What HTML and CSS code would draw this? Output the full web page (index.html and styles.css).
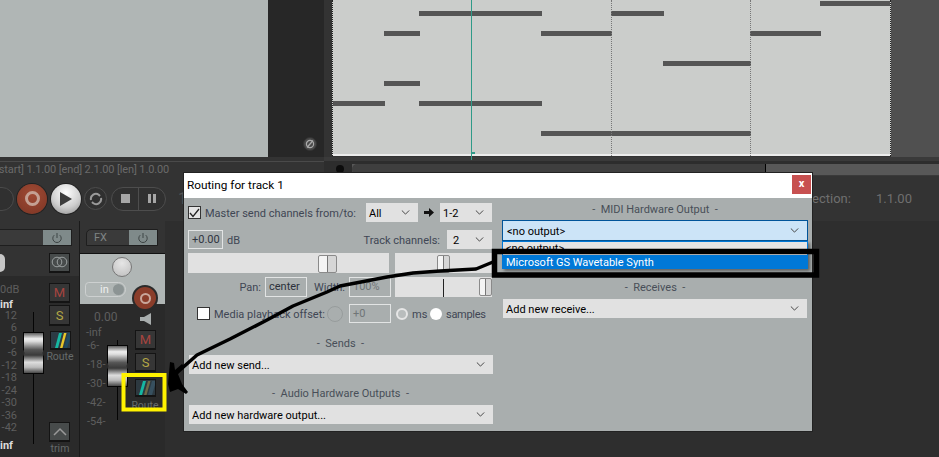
FILE: index.html
```html
<!DOCTYPE html>
<html lang="en">
<head>
<meta charset="utf-8">
<title>Routing for track 1</title>
<link rel="stylesheet" href="styles.css">
</head>
<body>
<svg class="defs" width="0" height="0" aria-hidden="true">
  <symbol id="chev" viewBox="0 0 11 6"><path d="M1 .5 5.5 5 10 .5" fill="none" stroke="#444" stroke-width="1.2"/></symbol>
  <symbol id="power" viewBox="0 0 12 12"><path d="M3.2 3.2a4.2 4.2 0 1 0 5.6 0M6 1v5" fill="none" stroke="#3d4444" stroke-width="1"/></symbol>
</svg>
<div class="app">
  <div class="top">
    <div class="panel"></div>
    <div class="tcp-col"><span class="bypass"><svg width="10" height="10" viewBox="0 0 10 10"><circle cx="5" cy="5" r="3.6" fill="none" stroke="#aaa" stroke-width="1.2"/><path d="M2 8.5 8 1.5" stroke="#aaa" stroke-width="1.2"/></svg></span></div>
    <div class="gutter"></div>
    <div class="midi">
      <i class="note n1"></i><i class="note n2"></i><i class="note n3"></i><i class="note n4"></i><i class="note n5"></i><i class="note n6"></i><i class="note n7"></i><i class="note n8"></i><i class="note n9"></i><i class="note n10"></i><i class="note n11"></i>
      <i class="grid g1"></i><i class="grid g2"></i><i class="grid g3"></i><i class="grid g0"></i>
      <i class="playhead"></i><i class="phmark"></i>
    </div>
    <div class="side"></div>
  </div>

  <div class="statusrow">
    <div class="status"><div class="status-text">[start] 1.1.00 [end] 2.1.00 [len] 1.0.00</div></div>
    <div class="scrollzone">
      <div class="scrollrow">
        <span class="scrollarrow"></span>
        <div class="scrolltrack"><span class="scrollthumb"></span></div>
      </div>
    </div>
  </div>

  <div class="transport">
    <span class="tbtn partial"></span>
    <span class="tbtn rec"><i></i></span>
    <span class="tbtn play"><svg width="14" height="16" viewBox="0 0 14 16"><path d="M1 1 13 8 1 15z" fill="#3c3c3c"/></svg></span>
    <span class="tbtn loop"><svg width="14" height="14" viewBox="0 0 14 14"><path d="M2 8a5 5 0 0 1 8-5l1 1M12 6a5 5 0 0 1-8 5L3 10" fill="none" stroke="#9a9a9a" stroke-width="2"/></svg></span>
    <span class="pill"><span class="seg"><i class="stop"></i></span><span class="seg"><i class="pbar"></i><i class="pbar"></i></span></span>
    <span class="one">1</span>
    <span class="sel"><span>Selection:</span><span>1.1.00</span></span>
  </div>

  <div class="mixer">
    <div class="strip s1">
      <div class="s1-head">
        <div class="fxbar s1fx"><span class="fxname"></span><span class="fxpow"><svg width="12" height="12"><use href="#power"/></svg></span></div>
        <div class="s1-row"><span class="knobsliver"></span><span class="mbtn stereo"><svg width="17" height="12" viewBox="0 0 17 12"><circle cx="6" cy="6" r="4.8" fill="none" stroke="#9a9f9f"/><circle cx="11" cy="6" r="4.8" fill="none" stroke="#9a9f9f"/></svg></span></div>
      </div>
      <div class="s1-body">
        <div class="s1-scale">
          <div class="odb">0dB</div>
          <div class="inf">inf</div>
          <div class="ticks"><span>12</span><span>6</span><span>-0</span><span>-6</span><span>-12</span><span>-18</span><span>-24</span><span>-30</span><span>-36</span><span>-42</span></div>
          <div class="inf">inf</div>
        </div>
        <i class="track t1"></i><i class="cap c1"></i>
        <div class="s1-btns">
          <span class="mbtn m">M</span>
          <span class="mbtn s">S</span>
          <span class="mbtn route"><svg width="19" height="17" viewBox="0 0 19 17"><path fill="#2c3b45" d="M0 0h19v17H0z"/><path fill="#16b7a2" d="M4 16 8 1h3L7 16z"/><path fill="#e8c62a" d="M9 16 13 1h2.500L11.500 16z"/><path fill="#1e4a63" d="M13 16 17 1h2v6l-3 9z"/></svg></span>
          <span class="lbl">Route</span>
          <span class="spacer"></span>
          <span class="mbtn trim"><svg width="14" height="9" viewBox="0 0 14 9"><path d="M1 8 7 2l6 6" fill="none" stroke="#999" stroke-width="1.500"/></svg></span>
          <span class="lbl">trim</span>
        </div>
      </div>
    </div>

    <div class="strip s2">
      <div class="s2-head"><div class="fxbar s2fx"><span class="fxname">FX</span><span class="fxpow"><svg width="12" height="12"><use href="#power"/></svg></span></div></div>
      <div class="trackpanel">
        <span class="knob"></span>
        <span class="inpill">in<i class="indrop"></i></span>
        <span class="arm"><i></i></span>
      </div>
      <div class="s2-body">
        <div class="s2-left">
          <div class="vol">0.00</div>
          <div class="minf">-inf</div>
          <div class="s2-ticks"><span>-6-</span><span>-18-</span><span>-30-</span><span>-42-</span><span>-54-</span></div>
        </div>
        <i class="track t2"></i><i class="cap c2"></i>
        <div class="s2-btns">
          <span class="speaker"><svg width="12" height="12" viewBox="0 0 12 12"><path fill="#a8adad" d="M0 4h4l7-4v12L4 8H0z"/></svg></span>
          <span class="mbtn m">M</span>
          <span class="mbtn s">S</span>
          <span class="mbtn route r2"><svg width="19" height="16" viewBox="0 0 19 16"><path fill="#2d3940" d="M0 0h19v16H0z"/><path fill="#16b7a2" d="M3 15 7 1h3L6 15z"/><path fill="#6f6a45" d="M8 15 12 1h2.500L10.500 15z"/><path fill="#37505f" d="M12 15 16 1h3v4l-3 10z"/></svg></span>
          <span class="lbl">Route</span>
        </div>
      </div>
    </div>
    <div class="mixrest"></div>
  </div>

  <div class="dialog">
    <div class="titlebar"><span class="title">Routing for track 1</span><span class="close">x</span></div>
    <div class="dbody">
      <div class="col-left">
        <div class="row r-master">
          <span class="check on"><svg width="11" height="10" viewBox="0 0 11 10"><path d="M1 5l3 3.500L10 1" fill="none" stroke="#222" stroke-width="1.300"/></svg></span>
          <span class="label master">Master send channels from/to:</span>
          <div class="select w52"><span>All</span><svg class="cv"><use href="#chev"/></svg></div>
          <svg class="rarrow" width="10" height="9" viewBox="0 0 10 9"><path fill="#111" d="M0 3h5V0l5 4.500L5 9V6H0z"/></svg>
          <div class="select w52"><span>1-2</span><svg class="cv"><use href="#chev"/></svg></div>
        </div>
        <div class="row r-db">
          <span class="input w36">+0.00</span><span class="label db">dB</span>
          <span class="label tc">Track channels:</span>
          <div class="select w45"><span>2</span><svg class="cv"><use href="#chev"/></svg></div>
        </div>
        <div class="row r-sliders">
          <div class="slider wide"><i class="thumb th1"></i></div>
          <div class="slider narrow"><i class="thumb th2"></i></div>
        </div>
        <div class="row r-pan">
          <span class="label pan">Pan:</span><span class="input w42 dark">center</span>
          <span class="label width">Width:</span><span class="input w42 faint">100%</span>
          <div class="slider narrow s3"><i class="tick"></i><i class="thumb th3"></i></div>
        </div>
        <div class="row r-media">
          <span class="check"></span>
          <span class="label media">Media playback offset:</span>
          <span class="dial"></span>
          <span class="input w42 faint">+0</span>
          <span class="radio on"></span><span class="label ms">ms</span>
          <span class="radio"></span><span class="label samples">samples</span>
        </div>
        <div class="heading sends">-&nbsp; Sends &nbsp;-</div>
        <div class="select full"><span>Add new send...</span><svg class="cv"><use href="#chev"/></svg></div>
        <div class="heading hw">-&nbsp; Audio Hardware Outputs &nbsp;-</div>
        <div class="select full"><span>Add new hardware output...</span><svg class="cv"><use href="#chev"/></svg></div>
      </div>
      <div class="col-right">
        <div class="heading midih">-&nbsp; MIDI Hardware Output &nbsp;-</div>
        <div class="select focus"><span>&lt;no output&gt;</span><svg class="cv"><use href="#chev"/></svg></div>
        <div class="dropdown">
          <div class="opt">&lt;no output&gt;</div>
          <div class="opt hl">Microsoft GS Wavetable Synth</div>
        </div>
        <div class="heading recv">-&nbsp; Receives &nbsp;-</div>
        <div class="select full recvsel"><span>Add new receive...</span><svg class="cv"><use href="#chev"/></svg></div>
      </div>
    </div>
  </div>

  <svg class="annot" width="939" height="457" viewBox="0 0 939 457" aria-hidden="true">
    <rect x="494.500" y="251.500" width="322" height="23.500" fill="none" stroke="#000" stroke-width="5.500"/>
    <rect x="123.500" y="375" width="41" height="34.500" fill="none" stroke="#fff200" stroke-width="4"/>
    <path d="M493 262 476 269 440 271 413 273 387 277 340 286 327 292 293 306 267 320 230 339 197 355 172 377" fill="none" stroke="#000" stroke-width="3.500" stroke-linejoin="round"/>
    <path d="M170 362 174 363 175 370 182 364 184 366 178 374 182 384 188 392 186 394 178 389 170 392 168 384z" fill="#000"/>
  </svg>
</div>
</body>
</html>
```
FILE: styles.css
```css
* { box-sizing: border-box; }
html, body { margin: 0; padding: 0; }
body { font-family: "Roboto", "Liberation Sans", sans-serif; font-size: 12px; background: #333; }
i { display: block; }
.defs { position: absolute; }
.app { position: relative; width: 939px; height: 457px; overflow: hidden; background: #333; }

/* arrange view */
.top { display: flex; height: 157px; }
.panel { width: 268px; background: #b0b6b5; }
.tcp-col { width: 56px; background: #272727; display: flex; justify-content: flex-end; align-items: flex-end; padding: 0 7px 6px 0; }
.bypass { width: 14px; height: 14px; border-radius: 50%; background: #4a4a4a; border: 1px solid #333; display: flex; align-items: center; justify-content: center; }
.gutter { width: 8px; background: #333; }
.midi { position: relative; width: 559px; height: 156px; background: #cbcdcb; border-bottom: 2px solid #ececec; }
.side { width: 48px; background: #505050; }
.note { position: absolute; height: 5px; background: #555; }
.n1 { left: 488px; width: 70px; top: 1px; }
.n2 { left: 87px; width: 123px; top: 11px; }
.n3 { left: 279px; width: 53px; top: 11px; }
.n4 { left: 52px; width: 36px; top: 31px; }
.n5 { left: 209px; width: 71px; top: 31px; }
.n6 { left: 418px; width: 71px; top: 31px; }
.n7 { left: 331px; width: 88px; top: 61px; }
.n8 { left: 52px; width: 36px; top: 81px; }
.n9 { left: 1px; width: 52px; top: 101px; }
.n10 { left: 87px; width: 123px; top: 101px; }
.n11 { left: 209px; width: 210px; top: 131px; }
.grid { position: absolute; top: 0; bottom: -2px; width: 0; border-left: 1px dotted #777; }
.g0 { left: 0; border-left-color: #222; }
.g1 { left: 279px; }
.g2 { left: 418px; }
.g3 { left: 558px; border-left-color: #222; }
.playhead { position: absolute; left: 139px; top: 0; width: 1px; height: 160px; background: #2f9a88; }
.phmark { position: absolute; left: 139px; top: 152px; width: 4px; height: 2px; background: #2f9a88; }

/* status and scrollbar */
.statusrow { display: flex; height: 19px; }
.status { width: 324px; padding-top: 4px; background: #333; overflow: hidden; }
.status-text { border-top: 1px solid #4a4a4a; height: 15px; line-height: 15px; font-size: 11px; letter-spacing: -.13px; color: #6a6a6a; text-indent: -4px; white-space: nowrap; }
.scrollzone { flex: 1; background: #3a3a3a; padding-top: 4px; }
.scrollrow { height: 14px; background: #2d2d2d; padding: 3px 0 0 12px; display: flex; align-items: flex-start; gap: 8px; }
.scrollarrow { width: 8px; height: 8px; margin-top: 1px; border-radius: 50%; background: #0c0c0c; }
.scrolltrack { flex: 1; height: 11px; background: #585858; position: relative; }
.scrollthumb { position: absolute; left: 0; top: 0; width: 414px; height: 11px; background: #3f3f3f; border-right: 1px solid #000; border-radius: 5px 0 0 5px; }

/* transport */
.transport { display: flex; align-items: center; height: 45px; background: #333; }
.tbtn { display: flex; align-items: center; justify-content: center; border-radius: 50%; flex: none; }
.partial { width: 30px; height: 24px; margin-left: -16px; border: 1px solid #4a4a4a; background: #303030; border-radius: 12px; }
.rec { width: 30px; height: 30px; margin-left: 3px; background: radial-gradient(circle at 50% 35%, #a04a34, #7c3524); box-shadow: 0 0 0 1px #222; }
.rec i { width: 15px; height: 15px; border-radius: 50%; border: 3px solid #c4a093; }
.play { width: 30px; height: 30px; margin-left: 4px; background: radial-gradient(circle at 50% 30%, #fff, #cfcfcf 55%, #8a8a8a); box-shadow: 0 0 0 1px #222; }
.loop { width: 23px; height: 23px; margin-left: 3px; background: #303030; border: 1px solid #4d4d4d; }
.pill { display: flex; width: 55px; height: 24px; margin-left: 4px; border: 1px solid #4d4d4d; border-radius: 12px; background: #303030; }
.seg { flex: 1; display: flex; align-items: center; justify-content: center; gap: 2px; }
.seg + .seg { border-left: 1px solid #4d4d4d; }
.stop { width: 9px; height: 9px; background: #a6a6a6; }
.pbar { width: 3px; height: 9px; background: #a6a6a6; }
.one { margin-left: 12px; font-size: 16px; color: #555; }
.sel { margin-left: auto; display: flex; gap: 25px; padding-right: 27px; font-size: 13px; color: #6f6f6f; }

/* mixer */
.mixer { display: flex; height: 236px; }
.strip { flex: none; display: flex; flex-direction: column; }
.s1 { width: 79px; background: #2a2a2a; }
.s1-head { height: 55px; background: #333; padding-top: 8px; }
.fxbar { display: flex; height: 17px; background: #3a3a3a; border: 1px solid #1e1e1e; }
.s1fx { width: 72px; border-left: 0; }
.fxname { flex: 1; color: #7f8484; font-size: 11px; line-height: 15px; padding-left: 7px; }
.fxpow { width: 28px; background: #7f8a8a; display: flex; align-items: center; justify-content: center; }
.s1-row { display: flex; justify-content: space-between; align-items: center; margin-top: 6px; padding-right: 9px; height: 21px; }
.knobsliver { width: 5px; height: 18px; background: #c7c7c7; border-radius: 0 9px 9px 0; }
.mbtn { display: flex; align-items: center; justify-content: center; width: 21px; height: 20px; flex: none; background: #363636; border: 1px solid #141414; border-bottom-width: 2px; font-size: 13px; }
.m { color: #a8443f; }
.s { color: #b3a645; }
.route { background: #2c3b45; padding: 0; overflow: hidden; }
.stereo, .trim { background: #474b4b; }
.lbl { display: block; width: 28px; margin-left: -4px; text-align: center; font-size: 10.500px; line-height: 14px; color: #666b6b; }
.s1-body { position: relative; flex: 1; display: flex; }
.s1-scale { width: 49px; color: #5e5e5e; font-size: 11px; text-align: right; }
.odb { line-height: 14px; margin-top: 7px; padding-right: 34px; }
.inf { height: 10px; line-height: 10px; margin-top: 3px; padding-right: 39px; color: #ddd; font-weight: 700; }
.ticks { display: flex; flex-direction: column; padding-right: 32px; }
.ticks span { height: 12.440px; line-height: 12px; }
.ticks + .inf { margin-top: 7px; }
.track { position: absolute; width: 1px; background: #050505; }
.t1 { left: 33px; top: 36px; height: 132px; }
.cap { position: absolute; background: linear-gradient(#444 0, #eee 16%, #ddd 22%, #555 42%, #3a3a3a 55%, #ddd 72%, #bbb 84%, #333 100%); box-shadow: inset 0 0 0 1px #050505; clip-path: polygon(0 0, 100% 0, 100% 42%, 92% 50%, 100% 58%, 100% 100%, 0 100%, 0 58%, 8% 50%, 0 42%); }
.c1 { left: 23px; top: 56px; width: 21px; height: 42px; }
.s1-btns { display: flex; flex-direction: column; padding-top: 7px; height: 181px; }
.s1-btns .s { margin-top: 2px; height: 21px; }
.s1-btns .route { margin: 5px 0 0 1px; height: 19px; }
.spacer { height: 58px; }
.s1-btns .lbl { margin-left: -3px; }

.s2 { width: 86px; background: #2a2a2a; border-left: 1px solid #1a1a1a; }
.s2-head { height: 32px; background: #333; padding: 8px 0 0 6px; }
.s2fx { width: 72px; border-radius: 5px 0 0 0; }
.trackpanel { position: relative; height: 51px; background: #b0b6b5; border-top: 1px solid #111; }
.knob { position: absolute; left: 32px; top: 3px; width: 20px; height: 20px; border-radius: 50%; background: radial-gradient(circle at 50% 30%, #e6e6e6, #bdbdbd); border: 1px solid #777; }
.inpill { position: absolute; left: 5px; top: 28px; width: 41px; height: 15px; border: 1px solid #cdd0d0; border-radius: 4px 8px 8px 4px; color: #eee; font-size: 11px; line-height: 13px; padding-left: 14px; }
.indrop { position: absolute; right: 1px; top: 1px; width: 11px; height: 11px; border-radius: 50%; background: #8c9494; }
.arm { position: absolute; left: 54px; top: 33px; width: 22px; height: 22px; border-radius: 50%; background: #8a3d2a; box-shadow: 0 0 0 2px #2a2a2a; display: flex; align-items: center; justify-content: center; z-index: 1; }
.arm i { width: 11px; height: 11px; border-radius: 50%; border: 2px solid #c9a79b; }
.s2-body { position: relative; flex: 1; display: flex; }
.s2-left { width: 55px; color: #5e5e5e; font-size: 11px; }
.vol { line-height: 14px; margin-top: 6px; padding-left: 14px; font-size: 12px; }
.minf { line-height: 7px; margin-top: 5px; padding-left: 6px; }
.s2-ticks { display: flex; flex-direction: column; padding-left: 7px; }
.s2-ticks span { height: 19px; line-height: 19px; }
.t2 { left: 37px; top: 36px; height: 80px; }
.c2 { left: 27px; top: 41px; width: 21px; height: 42px; }
.s2-btns { display: flex; flex-direction: column; }
.speaker { display: block; height: 26px; padding: 9px 0 0 5px; }
.s2-btns .s { margin-top: 3px; height: 19px; }
.s2-btns .route { margin-top: 7px; height: 18px; }
.s2-btns .lbl { margin-top: 2px; }
.mixrest { flex: 1; background: #2e2e2e; }

/* dialog */
.dialog { position: absolute; left: 184px; top: 173px; width: 628px; height: 258px; background: #a9aeae; box-shadow: 0 0 0 1px #222; font-size: 11px; }
.titlebar { display: flex; justify-content: space-between; height: 25px; padding: 2px 1px 0 3px; background: #fff; font-size: 11.800px; line-height: 19px; color: #000; }
.title { padding-top: 1px; }
.close { width: 19px; height: 19px; background: #c75050; color: #fff; font-weight: 700; font-size: 11px; line-height: 17px; text-align: center; }
.dbody { display: flex; gap: 9px; padding: 0 0 0 4px; }
.col-left { width: 305px; display: flex; flex-direction: column; }
.col-right { width: 306px; position: relative; }
.row { display: flex; align-items: center; }
.label { color: #404654; white-space: nowrap; padding-top: 2px; }
.samples { letter-spacing: -.3px; }
.select { display: flex; align-items: center; justify-content: space-between; height: 19px; flex: none; padding: 0 8px 0 3px; background: #e1e1e1; color: #000; white-space: nowrap; }
.select span { padding-top: 2px; }
.cv { width: 9px; height: 5px; flex: none; }
.w52 { width: 52px; }
.w45 { width: 45px; padding-left: 6px; }
.full { width: 304px; margin-left: 1px; }
.r-master { height: 19px; margin-top: 5px; }
.check { display: flex; align-items: center; justify-content: center; width: 13px; height: 13px; flex: none; background: #fff; border: 1px solid #333; }
.check.on { background: #e4e4e4; }
.master { margin-left: 4px; width: 161px; }
.rarrow { margin: 0 6px; flex: none; }
.r-db { height: 19px; margin-top: 8px; }
.input { display: block; flex: none; height: 19px; border: 1px solid #e2e4e4; padding-left: 3px; line-height: 18px; color: #303540; white-space: nowrap; }
.w36 { width: 35px; }
.w42 { width: 42px; }
.dark { color: #2c313b; }
.faint { color: #707577; }
.db { margin-left: 4px; width: 128px; }
.tc { width: 85px; text-align: right; margin-right: 7px; }
.r-sliders { gap: 6px; margin-top: 4px; height: 20px; }
.slider { position: relative; height: 20px; background: #e1e1e1; flex: none; }
.wide { width: 201px; }
.narrow { width: 97px; }
.thumb { position: absolute; top: 2px; height: 18px; border: 1px solid #8a8a8a; border-radius: 2px; background: linear-gradient(90deg, #f4f4f4 0 45%, #777 45% 55%, #d6d6d6 55%); }
.th1 { left: 130px; width: 19px; }
.th2 { left: 42px; width: 13px; }
.r-pan { margin-top: 3px; height: 21px; }
.r-pan .input { height: 20px; }
.pan { width: 73px; text-align: right; }
.r-pan .dark { margin-left: 4px; }
.width { margin-left: 7px; width: 35px; }
.s3 { margin-left: 4px; }
.tick { position: absolute; left: 48px; top: 2px; width: 1px; height: 18px; background: #222; }
.th3 { left: 84px; width: 13px; top: 1px; }
.r-media { margin-top: 7px; height: 19px; padding-left: 9px; }
.media { margin-left: 4px; width: 113px; }
.ms { width: 12px; }
.dial { width: 16px; height: 16px; border: 1px solid #979c9c; border-radius: 50%; margin-right: 6px; flex: none; }
.radio { width: 12px; height: 12px; border-radius: 50%; background: #fff; flex: none; margin: 0 4px 0 6px; }
.radio.on { background: #b9bdbd; border: 2px solid #e6e6e6; margin-left: 5px; }
.heading { height: 16px; line-height: 16px; padding-top: 1px; text-align: center; color: #484e58; white-space: nowrap; }
.sends { margin-top: 12px; margin-bottom: 4px; }
.hw { margin-top: 11px; margin-bottom: 4px; }
.midih { margin-top: 3px; margin-bottom: 3px; }
.focus { height: 21px; width: 306px; background: #cce4f7; border: 1px solid #005499; padding-left: 4px; }
.dropdown { position: absolute; left: 0; top: 43px; width: 306px; height: 28px; background: #e4e4e4; border: 1px solid #0078d7; border-bottom: 0; box-shadow: 2px 2px 3px rgba(0,0,0,.45); overflow: hidden; z-index: 2; }
.opt { height: 13px; line-height: 13px; padding-left: 3px; color: #000; }
.opt.hl { height: 14px; line-height: 13px; padding-top: 1px; background: #0078d7; color: #fff; }
.recv { margin-top: 38px; margin-bottom: 4px; }
.recvsel { margin-left: 1px; }

.annot { position: absolute; left: 0; top: 0; z-index: 5; pointer-events: none; }
```
